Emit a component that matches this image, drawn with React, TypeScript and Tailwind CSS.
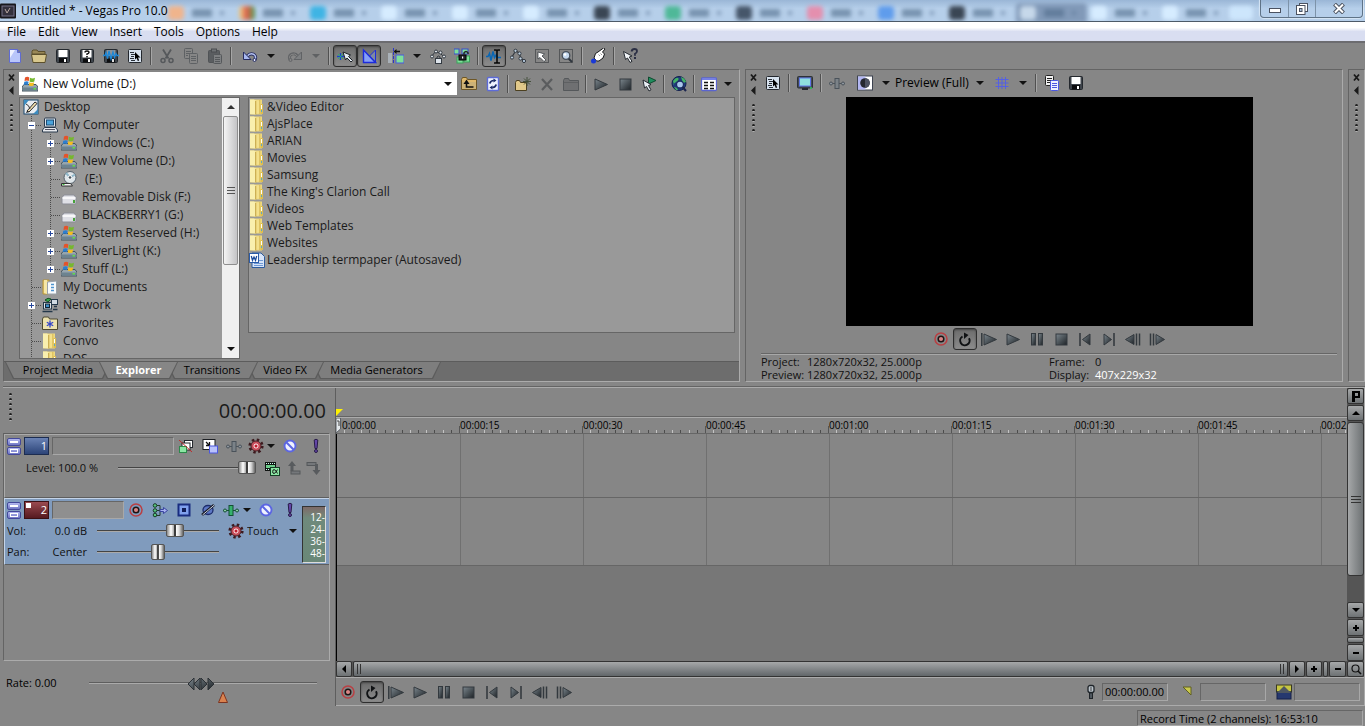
import React from 'react';

// 16x16 toolbar drawings, keyed by name
const ICONS: Record<string, React.ReactNode> = {
  newFile: (
    <>
      <path d="M2.500 1.500h8l3 3v10h-11z" fill="#b9c6fa" stroke="#5f6bd0" />
      <path d="M3 2h5L3 10z" fill="#eef1ff" />
      <path d="M10.500 1.500v3h3z" fill="#868686" stroke="#5f6bd0" />
    </>
  ),
  open: (
    <>
      <path d="M1 5V3l1-1h4l1 1.500h7V6H1z" fill="#9a8857" stroke="#5c502d" />
      <path d="M.5 6.500h15l-1.500 8h-12z" fill="#d8c78d" stroke="#5c502d" />
    </>
  ),
  save: (
    <>
      <rect x="1.500" y="1.500" width="13" height="13" rx="1" fill="#3e444b" stroke="#24282d" />
      <rect x="3.500" y="2" width="9" height="7" fill="#fff" />
      <rect x="4" y="10" width="8" height="4.500" fill="#0c0d0f" />
      <rect x="9" y="11" width="2" height="3" fill="#fff" />
    </>
  ),
  saveAs: (
    <>
      <rect x="1.500" y="1.500" width="13" height="13" rx="1" fill="#3e444b" stroke="#24282d" />
      <rect x="3.500" y="2" width="9" height="7.500" fill="#fff" />
      <path d="M6 4.500q0-1.500 2-1.500t2 1.500Q10 5.500 8 6v1" fill="none" stroke="#111" strokeWidth="1.400" />
      <rect x="7.200" y="8" width="1.600" height="1.400" fill="#111" />
      <rect x="4" y="10.500" width="8" height="4" fill="#0c0d0f" />
      <rect x="9" y="11" width="2" height="3" fill="#fff" />
    </>
  ),
  render: (
    <>
      <rect x="1.500" y="1.500" width="13" height="13" rx="1" fill="#3e444b" stroke="#24282d" />
      <rect x="3.500" y="2" width="9" height="6" fill="#8b9299" />
      <rect x="4" y="10.500" width="8" height="4" fill="#0c0d0f" />
      <rect x="9" y="11" width="2" height="3" fill="#ddd" />
      <path d="M0 7.500h2l1-3 1.500 6L6 3l2 8 2-7 1.500 5.500 1.500-4 1 2h2" fill="none" stroke="#1d88d8" strokeWidth="1.300" />
    </>
  ),
  props: (
    <>
      <rect x="1.500" y="1.500" width="13" height="13" rx="1" fill="#d7e2ee" stroke="#23272d" />
      <path d="M3 4.500h4M4 6.500h4M4 8.500h3M3 10.500h4M4 12.500h4" stroke="#2a3038" />
      <path d="M8 4l5.500 5.500H11l1.200 3-1.400.6L9.600 10 8 11.500z" fill="#000" />
    </>
  ),
  cut: (
    <>
      <path d="M4 1.500l5.500 9M12 1.500l-5.500 9" stroke="#55585b" strokeWidth="1.800" />
      <circle cx="4" cy="12.500" r="2" fill="none" stroke="#55585b" strokeWidth="1.500" />
      <circle cx="12" cy="12.500" r="2" fill="none" stroke="#55585b" strokeWidth="1.500" />
    </>
  ),
  copy: (
    <>
      <rect x="1.500" y=".5" width="8" height="10" rx="1" fill="#868686" stroke="#5e6164" />
      <path d="M3 3.500h5M3 5.500h5M3 7.500h2" stroke="#5e6164" />
      <rect x="6.500" y="5.500" width="8" height="10" rx="1" fill="#868686" stroke="#5e6164" />
      <path d="M8 8.500h5M8 10.500h5M8 12.500h5" stroke="#5e6164" />
    </>
  ),
  paste: (
    <>
      <rect x="1.500" y="2.500" width="11" height="12" rx="1" fill="#5a5d60" stroke="#505356" />
      <rect x="4.500" y="1" width="5" height="3" fill="#6f7275" stroke="#4a4d50" />
      <rect x="6.500" y="6.500" width="8" height="9" rx="1" fill="#7d7f81" stroke="#55585b" />
      <path d="M8 9.500h5M8 11.500h5M8 13.500h5" stroke="#55585b" />
    </>
  ),
  undo: (
    <>
      <path d="M5 8.500Q8 4.500 12 6.500Q14.500 8.500 13 11.500" fill="none" stroke="#262c60" strokeWidth="3.200" />
      <path d="M5 8.500Q8 4.500 12 6.500Q14.500 8.500 13 11.500" fill="none" stroke="#b6c3f2" strokeWidth="1.400" />
      <path d="M1.500 4v7.500H9z" fill="#a9b9f0" stroke="#262c60" />
      <circle cx="12.500" cy="12" r="1.500" fill="#e6ebff" stroke="#262c60" />
    </>
  ),
  redo: (
    <>
      <path d="M11 8.500Q8 4.500 4 6.500Q1.500 8.500 3 11.500" fill="none" stroke="#626467" strokeWidth="3" />
      <path d="M11 8.500Q8 4.500 4 6.500Q1.500 8.500 3 11.500" fill="none" stroke="#868686" />
      <path d="M14.500 4v7.500H7z" fill="#7e8082" stroke="#606265" />
      <circle cx="3.500" cy="12" r="1.500" fill="#868686" stroke="#626467" />
    </>
  ),
  snap: (
    <>
      <path d="M0 8.500h7M3.500 5v7" stroke="#1849c8" strokeWidth="1.300" />
      <path d="M1 6l5 5M6 6l-5 5" stroke="#2fb26a" />
      <path d="M6 4l2.500 8 1.500-2 4 4 1.500-1.500-4-4 2-1.500z" fill="#e4ecf4" stroke="#1c2126" />
    </>
  ),
  crossfade: (
    <>
      <path d="M14.500 2v12.500L8.500 8z" fill="#7d88a4" stroke="#1c2bdc" />
      <path d="M2.500 2v12.500h12z" fill="#86a0f6" stroke="#1c2bdc" strokeWidth="1.400" />
    </>
  ),
  ripple: (
    <>
      <rect x="0" y="5" width="4" height="10" fill="#a9b1b8" />
      <path d="M5.500 0v16" stroke="#2b35c8" strokeDasharray="3 1" />
      <rect x="8" y="7" width="8" height="8" fill="#7fe09a" stroke="#4b57e0" />
      <path d="M12 3.500H7" stroke="#111" strokeWidth="1.500" />
      <path d="M5.500 3.500l3-2.500v5z" fill="#111" />
    </>
  ),
  lockEnv: (
    <>
      <path d="M2 8l3-4 5 1 4 4" fill="none" stroke="#333a42" />
      <g fill="#dde3ea" stroke="#333a42">
        <circle cx="2" cy="8.500" r="1.500" />
        <circle cx="6" cy="3.500" r="1.500" />
        <circle cx="10.500" cy="4.500" r="1.500" />
        <circle cx="14" cy="8.500" r="1.500" />
        <rect x="5.500" y="10.500" width="6" height="5" />
        <path d="M7 10.500V9q1.500-2 3 0v1.500" fill="none" />
      </g>
    </>
  ),
  ignoreGroup: (
    <>
      <rect x="0" y="1" width="5" height="5" fill="#7fe09a" stroke="#3a4ad0" />
      <rect x="8" y="1" width="6" height="5" fill="#7fe09a" stroke="#3a4ad0" />
      <rect x="3" y="9" width="6" height="6" fill="#7fe09a" stroke="#3aa35a" />
      <rect x="10" y="8" width="5.500" height="6" fill="#7fe09a" stroke="#3aa35a" />
      <rect x="5" y="7" width="7" height="5" fill="#24282d" stroke="#000" />
      <path d="M10 7V5q2-3 4 0v1" fill="none" stroke="#24282d" strokeWidth="1.500" />
      <rect x="8" y="8.500" width="1.200" height="2" fill="#fff" />
    </>
  ),
  normalEdit: (
    <>
      <path d="M0 8.500h2l1.500-3 1.500 7 2-9 1.500 6 2-3 1 3h3.500" fill="none" stroke="#0866b5" strokeWidth="1.500" />
      <path d="M8 2h2l1 .7 1-.7h2M8 15h2l1-.7 1 .7h2M11 2.500v12" stroke="#0a0a0a" strokeWidth="1.600" fill="none" />
    </>
  ),
  envelope: (
    <>
      <path d="M2 9l3.500-6 4 2 1 5 3.500 3" fill="none" stroke="#333a42" strokeWidth="1.200" />
      <g fill="#bcd0e2" stroke="#333a42">
        <circle cx="2" cy="9.500" r="1.600" />
        <circle cx="5.500" cy="2.800" r="1.600" />
        <circle cx="9.500" cy="5.500" r="1.600" />
        <circle cx="10.500" cy="10.500" r="1.600" />
        <circle cx="14" cy="13" r="1.600" />
      </g>
    </>
  ),
  selectEdit: (
    <>
      <rect x="1.500" y="1.500" width="13" height="13" fill="none" stroke="#24282d" strokeDasharray="1 1" />
      <path d="M4 4v7l2-1.500 4 4 2-1.500-4-4 2.500-2z" fill="#fff" stroke="#2b3036" strokeWidth=".7" />
    </>
  ),
  zoomEdit: (
    <>
      <rect x="1.500" y="1.500" width="13" height="13" fill="none" stroke="#24282d" strokeDasharray="1 1" />
      <path d="M10 10l4 4" stroke="#2f363e" strokeWidth="2" />
      <circle cx="8" cy="7.500" r="3.800" fill="#c5d8ee" stroke="#46505c" strokeWidth="1.300" />
      <circle cx="7" cy="6.500" r="1.300" fill="#fff" />
    </>
  ),
  hand: (
    <>
      <path d="M4 10l1.500-4.500L8 4l5.500-4 1.500 1-2.500 3 2 2-1.500 4L9 13H6.500z" fill="#fff" stroke="#15171a" />
      <path d="M8.500 6.500l1.500 1.500M10.500 5.500l1.500 1.500" stroke="#777" strokeWidth=".8" />
      <circle cx="3.500" cy="13" r="2.500" fill="#1a39d6" />
    </>
  ),
  help: (
    <>
      <path d="M1.500 3.500l2 8 2-1.500 2.500 4.500 2-1.200-2.700-4.300L10 8z" fill="#f3f6f9" stroke="#262b31" />
      <path d="M9.500 3.500q.5-2.500 3-2.500t2.500 2.200q0 1.500-2 2.500v2" fill="none" stroke="#2b2f44" strokeWidth="1.800" />
      <rect x="12" y="9" width="2" height="2" fill="#2b2f44" />
    </>
  ),
  up: (
    <>
      <path d="M.5 3.500l1-2h4l1 2h9v10H.5z" fill="#e0b96c" stroke="#6d5626" />
      <path d="M1 6h14v7H1z" fill="#cdb277" />
      <path d="M5.500 6v5h7" fill="none" stroke="#111" strokeWidth="1.600" />
      <path d="M5.500 3.500L2.500 8h6z" fill="#111" />
    </>
  ),
  refresh: (
    <>
      <rect x="2.500" y="1.500" width="11" height="13" rx="1" fill="#eef3ff" stroke="#5d6bd8" strokeWidth="1.400" />
      <path d="M4.800 7.500q.7-3 4-3M11.200 8.500q-.7 3-4 3" fill="none" stroke="#1b2a66" strokeWidth="1.700" />
      <path d="M8.500 2.500l3 2-3 2zM7.500 9.500l-3 2 3 2z" fill="#1b2a66" />
    </>
  ),
  newFolder: (
    <>
      <path d="M.5 6.500l1-2h3l1 2h6v8H.5z" fill="#e1c98a" stroke="#4c4020" />
      <path d="M12 1v9M8 5.500h8M9 2.500l6 6M15 2.500l-6 6" stroke="#3d4a34" strokeWidth=".9" />
    </>
  ),
  del: <path d="M3 3l10 11M13 3L3 14" stroke="#5a5c5e" strokeWidth="2.200" />,
  folderOff: (
    <>
      <path d="M.5 4.500l1-2h4l1 2h9v10H.5z" fill="#6f7072" stroke="#55585b" />
      <path d="M1 6.500h14" stroke="#5e6062" />
    </>
  ),
  play: <path d="M2 3l12.500 5.500L2 14z" fill="url(#steel)" stroke="#33393e" />,
  stop: <rect x="3" y="3" width="11" height="11" fill="url(#steel)" stroke="#33393e" />,
  autoPlay: (
    <>
      <path d="M7.500 1l7.500 3.500L7.500 8z" fill="#1f8d5d" stroke="#0f4a30" />
      <path d="M2 4l1.500 8 2-1.500 2.500 4.500 2-1.200-2.500-4.300 2.500-1z" fill="#e8eef4" stroke="#262b31" />
    </>
  ),
  globe: (
    <>
      <circle cx="8" cy="7.500" r="7" fill="#203a7c" stroke="#11204d" />
      <path d="M2 5q3-4 5-3T5 6 3 9zM10 1q4 1 5 5l-3 1zM3 11q3 0 4 3l-2 0z" fill="#43b264" />
      <circle cx="9" cy="8.500" r="3.500" fill="#a9c8ea" stroke="#1d2f63" strokeWidth="1.300" />
      <path d="M11.500 11l3.500 4" stroke="#1c2550" strokeWidth="2" />
    </>
  ),
  views: (
    <>
      <rect x=".5" y="2" width="15" height="12.500" rx="1" fill="#fff" stroke="#5a64cf" strokeWidth="1.300" />
      <path d="M1 3.200h14" stroke="#6d79e6" strokeWidth="1.500" />
      <path d="M3 6.500h4M3 9.500h4M3 12.500h4M9 6.500h4M9 9.500h4M9 12.500h4" stroke="#111" strokeWidth="1.400" />
    </>
  ),
  monitor: (
    <>
      <rect x=".5" y="1.500" width="15" height="11.500" rx="1" fill="#454b54" stroke="#2c3138" />
      <rect x="2.500" y="3" width="11" height="8" fill="#8fe0de" stroke="#5c75e8" />
      <rect x="5" y="13" width="6" height="2" fill="#24282d" />
      <circle cx="14" cy="13" r="1" fill="#2ecb5c" />
    </>
  ),
  fxOff: (
    <>
      <path d="M0 8.500h16" stroke="#4a525a" />
      <circle cx="2" cy="8.500" r="1.500" fill="#8e969e" stroke="#4a525a" />
      <circle cx="14" cy="8.500" r="1.500" fill="#8e969e" stroke="#4a525a" />
      <rect x="6" y="3.500" width="4" height="10" fill="#7b8288" stroke="#4a525a" />
    </>
  ),
  fxOn: (
    <>
      <path d="M0 8.500h16" stroke="#134f33" />
      <circle cx="2" cy="8.500" r="1.500" fill="#8fcfa8" stroke="#134f33" />
      <circle cx="14" cy="8.500" r="1.500" fill="#8fcfa8" stroke="#134f33" />
      <rect x="6" y="3.500" width="4" height="10" fill="#35b26c" stroke="#134f33" />
    </>
  ),
  split: (
    <>
      <rect x=".5" y="1" width="15" height="14" fill="#fff" stroke="#3d4350" />
      <rect x="1" y="1.500" width="7.500" height="13" fill="#b3b7f2" />
      <circle cx="8" cy="8" r="4.800" fill="#25282f" />
      <path d="M8 3.200a4.800 4.800 0 0 1 0 9.600z" fill="#4c5160" />
    </>
  ),
  grid: <path d="M4.500 2v12M8 2v12M11.500 2v12M1.500 4.500h13M1.500 8h13M1.500 11.500h13" stroke="#5560e2" />,
  copyShot: (
    <>
      <rect x="1.500" y=".5" width="8" height="10" rx="1" fill="#f2f2f2" stroke="#222" />
      <path d="M3 3.500h5M3 5.500h5M3 7.500h4" stroke="#222" />
      <rect x="6.500" y="5.500" width="8" height="10" rx="1" fill="#eef0ff" stroke="#4b57e0" />
      <path d="M8 8.500h5M8 10.500h5M8 12.500h5" stroke="#4b57e0" />
    </>
  ),
  record: (
    <>
      <circle cx="8" cy="8" r="6" fill="none" stroke="#b93f43" strokeWidth="1.500" />
      <circle cx="8" cy="8" r="2.800" fill="#d98585" stroke="#1c1414" strokeWidth="1.500" />
    </>
  ),
  loop: (
    <>
      <path d="M5.500 5.500a4.700 4.700 0 1 0 6.500 1.800" fill="none" stroke="#101214" strokeWidth="2" />
      <path d="M7 1.500v6.500l4.500-4z" fill="#101214" />
    </>
  ),
  playStart: (
    <>
      <path d="M.8 2v13" stroke="#33393e" strokeWidth="1.500" />
      <path d="M3 3l12.500 5.500L3 14z" fill="url(#steel)" stroke="#33393e" />
    </>
  ),
  pause: (
    <>
      <rect x="2.500" y="2.500" width="4" height="11.500" fill="url(#steel)" stroke="#33393e" />
      <rect x="9.500" y="2.500" width="4" height="11.500" fill="url(#steel)" stroke="#33393e" />
    </>
  ),
  toStart: (
    <>
      <path d="M3 2v13" stroke="#2f353a" strokeWidth="1.500" />
      <path d="M13 3v11L5.500 8.500z" fill="url(#steel)" stroke="#33393e" />
    </>
  ),
  toEnd: (
    <>
      <path d="M13 2v13" stroke="#2f353a" strokeWidth="1.500" />
      <path d="M3 3v11l7.500-5.500z" fill="url(#steel)" stroke="#33393e" />
    </>
  ),
  prevFrame: (
    <>
      <path d="M9 3.500v10L.5 8.500z" fill="url(#steel)" stroke="#33393e" />
      <path d="M11.500 2.500v12M14.500 2.500v12" stroke="#33393e" strokeWidth="1.500" />
    </>
  ),
  nextFrame: (
    <>
      <path d="M7 3.500v10l8.500-5z" fill="url(#steel)" stroke="#33393e" />
      <path d="M1.500 2.500v12M4.500 2.500v12" stroke="#33393e" strokeWidth="1.500" />
    </>
  ),
  bypassBlur: (
    <>
      <rect x="6.500" y="2.500" width="8" height="7" fill="#fff" stroke="#24282d" />
      <rect x="4" y="5" width="8" height="7" fill="#fff" stroke="#24282d" />
      <rect x="1.500" y="8.500" width="7" height="6" fill="#8ce6a4" stroke="#2a8a4a" />
      <path d="M1 2l13 12" stroke="#c02a2a" />
    </>
  ),
  panCrop: (
    <>
      <rect x="1" y="1.500" width="12" height="10" fill="#fff" stroke="#1b1e22" />
      <path d="M4 4l3 3M7.500 4v3.500H4" stroke="#111" strokeWidth="1.300" fill="none" />
      <rect x="7.500" y="8" width="8" height="7" fill="#b9c2fb" stroke="#4b57e0" />
    </>
  ),
  gear: (
    <>
      <circle cx="8" cy="8" r="6.200" fill="none" stroke="#3c1a1e" strokeWidth="2.800" strokeDasharray="2.400 2.470" />
      <circle cx="8" cy="8" r="5" fill="#c45560" stroke="#4b1e24" />
      <circle cx="8" cy="8" r="3.200" fill="#f6d7da" stroke="#c03040" />
      <circle cx="8" cy="8" r="1.500" fill="#c01c30" />
    </>
  ),
  mute: (
    <>
      <circle cx="8" cy="8" r="5.500" fill="#f0f2ff" stroke="#5c66e2" strokeWidth="1.900" />
      <path d="M4.300 4.300l7.400 7.400" stroke="#5c66e2" strokeWidth="2" />
    </>
  ),
  solo: (
    <>
      <path d="M6.200 2q1.800-1.500 3.600 0L9 10.500H7z" fill="#6446a8" stroke="#281c48" />
      <circle cx="8" cy="13" r="1.500" fill="#6446a8" stroke="#281c48" />
    </>
  ),
  composite: (
    <>
      <rect x="1" y="2" width="11" height="9" fill="#101412" />
      <path d="M2 3.500h9M2 9.500h5" stroke="#cfe" strokeDasharray="1 1" />
      <rect x="2" y="5" width="9" height="3" fill="#6dce8b" />
      <rect x="6.500" y="7.500" width="9" height="8" fill="#8ce6a4" stroke="#143e24" />
      <path d="M13.500 9.500q-2 4-3.500 4t-1.300-2 1.300-2q1.500 0 3.500 4" fill="none" stroke="#111" />
    </>
  ),
  parent: (
    <>
      <path d="M2 6l4-5 4 5H7.500v5h-3V6z" fill="#585b5e" />
      <rect x="5" y="11" width="9" height="3" fill="#74777a" stroke="#55585b" />
    </>
  ),
  child: (
    <>
      <rect x="1" y="2.500" width="9" height="3" fill="#74777a" stroke="#55585b" />
      <path d="M9 4h3v6h2.500l-4 5-4-5H9z" fill="#585b5e" />
    </>
  ),
  inputFx: (
    <>
      <path d="M5 3.500h3v10H5M5 8.500h4" fill="none" stroke="#223a2c" />
      <g fill="#57c57f" stroke="#173a26">
        <circle cx="3" cy="3.500" r="1.800" />
        <circle cx="3" cy="8.500" r="1.800" />
        <circle cx="3" cy="13" r="1.800" />
      </g>
      <path d="M8 7.500h3.500V5.500l4 3-4 3V9.500H8z" fill="#a8b2f2" stroke="#39459e" />
    </>
  ),
  busSquare: (
    <>
      <rect x="2.500" y="2.500" width="11" height="11" fill="#7fa0ee" stroke="#182c80" strokeWidth="2" />
      <rect x="6" y="6" width="4" height="4" fill="#101c58" />
    </>
  ),
  phase: (
    <>
      <ellipse cx="8" cy="8" rx="5" ry="4.500" fill="#5b76c4" stroke="#1c2c6a" strokeWidth="1.300" />
      <path d="M2 13L14 3" stroke="#1a1c22" strokeWidth="2.500" />
      <path d="M2.500 13L14 3.300" stroke="#d9e2ff" strokeWidth=".9" />
    </>
  ),
  mic: (
    <>
      <rect x="5" y="1.500" width="6" height="7" rx="2" fill="#b9c2ca" stroke="#1f2429" strokeWidth="1.300" />
      <path d="M8 3v4" stroke="#444" />
      <rect x="6.500" y="9" width="3" height="5.500" fill="#4f575e" stroke="#1f2429" />
    </>
  ),
  cursorMark: <path d="M3 3h8v8z" fill="#c9c84c" stroke="#5f5e22" />,
  loopMark: (
    <>
      <rect x=".5" y="1" width="15" height="7" fill="#c6c542" stroke="#3a3a20" />
      <rect x="1" y="8" width="14" height="7" fill="#26386f" stroke="#16204a" />
      <path d="M1 9l7-7 7 7z" fill="#4e5660" />
    </>
  ),
  desktop: (
    <>
      <rect x="1" y="1" width="14" height="14" fill="#e9edf2" stroke="#1d4a70" />
      <path d="M1 1h5L1 7zM15 15h-5l5-5z" fill="#3c8cc0" />
      <path d="M4 12l8-9 2 1.500-8 8.500z" fill="#f7e3b0" stroke="#26292d" />
      <path d="M4 12l-1 2 3-1z" fill="#111" />
      <path d="M3 5q3 1 4 5" stroke="#333" fill="none" />
    </>
  ),
  computer: (
    <>
      <rect x="2.500" y="1" width="11" height="9" rx="1" fill="#d9e0e8" stroke="#2a3a4d" />
      <rect x="4.500" y="3" width="7" height="5" fill="#4ba4dc" stroke="#1d4c74" />
      <path d="M.5 13l2-2.500h11l2 2.500v2H.5z" fill="#e8eaee" stroke="#2a3a4d" />
      <path d="M3 12.500h10" stroke="#556" />
    </>
  ),
  winDrive: (
    <>
      <path d="M0 11l2-2.500h12l2 2.500v4H0z" fill="#96a5ae" stroke="#45555e" />
      <rect x="1" y="11.500" width="14" height="3" fill="#6c8390" />
      <rect x="11.500" y="12" width="2.500" height="1.500" fill="#62e04a" />
      <path d="M3 1.500Q5.500 0 7.300 1.500L6.800 5Q5 4 2.500 5z" fill="#e4532a" />
      <path d="M8 1.800q2.500 1.200 5 0L12.300 5.500q-2.500 1-4.800 0z" fill="#76b82e" />
      <path d="M2.300 5.700Q5 4.700 6.600 5.700L6 9Q4 8.200 1.700 9z" fill="#2b7fd0" />
      <path d="M7.300 6.200q2.500 1 4.800 0L11.500 9.500q-2.500 1-4.700 0z" fill="#f4bd22" />
    </>
  ),
  disc: (
    <>
      <circle cx="9" cy="6.500" r="6" fill="#dfe6ea" stroke="#56626c" />
      <path d="M9 6.500L14 3.500M9 6.500L5 2" stroke="#8fb6c8" strokeWidth="2" />
      <circle cx="9" cy="6.500" r="1.800" fill="#46525c" stroke="#fff" />
      <path d="M.5 12.500h9l2 2.500H.5z" fill="#f3f3f3" stroke="#333" />
      <rect x="1.500" y="13" width="2" height="1" fill="#3cc43c" />
    </>
  ),
  removable: (
    <>
      <path d="M1 8.500L3 6h10l2 2.500v5.500q0 1-1 1H2q-1 0-1-1z" fill="#dfe0e6" stroke="#8b8d96" />
      <path d="M1.500 9h13" stroke="#fff" strokeWidth="1.500" />
      <rect x="12" y="11" width="2" height="3" fill="#46a23a" />
    </>
  ),
  documents: (
    <>
      <path d="M1 1h6v14H1z" fill="#e8cd77" stroke="#b49338" />
      <path d="M5.500 3l9-1v13h-9z" fill="#f8fafc" stroke="#9aa2aa" />
      <path d="M9 5.500h3M9 8.500h3M9 11.500h3" stroke="#4d94cf" strokeWidth="1.300" />
      <path d="M2 1h3v14l-3-1z" fill="#f6e7a7" />
    </>
  ),
  network: (
    <>
      <path d="M3 3q3-3 6-1L6 5z" fill="#35a34b" stroke="#145223" />
      <rect x="9.500" y="2.500" width="6" height="5" fill="#cfdae3" stroke="#24384a" />
      <rect x="1.500" y="5.500" width="8" height="6.500" fill="#e0e7ec" stroke="#24384a" />
      <rect x="3.500" y="7" width="4" height="3.500" fill="#3d8fc9" stroke="#123" />
      <path d="M.5 14.500h10M12 9.500h3M11 12.500h4.500" stroke="#24384a" strokeWidth="1.500" />
    </>
  ),
  favorites: (
    <>
      <path d="M.5 4l1-2h5l1 2h8v10.500H.5z" fill="#ece2ae" stroke="#4d4930" />
      <path d="M8 5.500v7M4.800 7.200l6.400 3.600M11.200 7.200l-6.400 3.600" stroke="#3446c9" strokeWidth="1.300" />
    </>
  ),
  folder: (
    <>
      <path d="M1 .5h12v15H1z" fill="#efd97f" />
      <path d="M1 .5h4l2 1.500v13.500L1 15z" fill="#f9efae" />
      <path d="M6.800 2v13.500" stroke="#b9942e" />
      <path d="M7.500 1.500h3v12.500l-3 1z" fill="#f3e08c" />
      <path d="M10.800 1v14" stroke="#d0ac42" strokeWidth=".7" />
      <rect x="11.500" y="5" width="2.500" height="10" fill="#dcbd50" />
      <rect x="12" y="6" width="1" height="4" fill="#fff" />
      <rect x="12" y="11" width="1" height="2" fill="#5aa7c8" />
    </>
  ),
  word: (
    <>
      <path d="M3 1h9l3.500 3.500V15.500H3z" fill="#d7e4f8" stroke="#2d5c9e" />
      <path d="M9 8.500h5M5 11.500h9M5 13.500h9" stroke="#6f9ad6" />
      <rect x=".5" y="1.500" width="9" height="9" fill="#fff" stroke="#2a5ba8" />
      <path d="M2.300 4l1.200 4.300L5 5l1.500 3.300L7.700 4" fill="none" stroke="#1c4c9c" strokeWidth="1.300" />
    </>
  ),
};

const Icon: React.FC<{ name: string; className?: string }> = ({ name, className = 'size-4' }) => (
  <svg viewBox="0 0 16 16" className={`shrink-0 ${className}`} aria-hidden="true">
    {ICONS[name]}
  </svg>
);

const Arrow: React.FC<{ off?: boolean }> = ({ off }) => (
  <svg viewBox="0 0 8 4" className="h-1 w-2 shrink-0" aria-hidden="true">
    <path d="M0 0h8L4 4z" fill={off ? '#5f6163' : '#111'} />
  </svg>
);

interface ToolProps {
  icon: string;
  label: string;
  pressed?: boolean;
  width?: string;
}

const Tool: React.FC<ToolProps> = ({ icon, label, pressed, width = 'w-6' }) => (
  <button
    aria-label={label}
    className={`flex h-[22px] shrink-0 items-center justify-center ${width} ${
      pressed ? 'rounded-[3px] border border-[#2e2e2e] bg-linear-to-b from-[#6c6c6c] to-[#8c8c8c] shadow-[inset_0_1px_2px_#444]' : ''
    }`}
  >
    <Icon name={icon} />
  </button>
);

const DropButton: React.FC<{ label: string; off?: boolean; width?: string }> = ({ label, off, width = 'w-[18px]' }) => (
  <button aria-label={label} className={`flex h-[22px] shrink-0 items-center justify-center ${width}`}>
    <Arrow off={off} />
  </button>
);

const Sep: React.FC<{ tight?: boolean }> = ({ tight }) => (
  <div className={`h-[18px] w-[2px] shrink-0 border-l border-r border-l-[#505050] border-r-[#a6a6a6] ${tight ? 'mx-[2px]' : 'mx-[3px]'}`} />
);

const Dots = () => (
  <div className="flex flex-col gap-[2px]">
    {[0, 1, 2, 3, 4, 5].map(i => (
      <span key={i} className="block h-[3px] w-[3px] rounded-full border-b border-b-[#b5b5b5] bg-[#1c1c1c]" />
    ))}
  </div>
);

const Gutter = () => (
  <div className="flex w-[15px] shrink-0 flex-col items-center pt-[3px]">
    <button aria-label="Close panel" className="h-[9px] w-[9px]">
      <svg viewBox="0 0 9 9" className="size-[9px]"><path d="M2 1.500l5 6M7 1.500l-5 6" stroke="#1a1a1a" strokeWidth="1.800" /></svg>
    </button>
    <button aria-label="Collapse panel" className="mt-1 h-[9px] w-[9px]">
      <svg viewBox="0 0 9 9" className="size-[9px]"><path d="M6.500 0v9L2 4.500z" fill="#1a1a1a" /></svg>
    </button>
    <div className="mt-[9px]"><Dots /></div>
  </div>
);

const panel = 'border border-t-[#646464] border-l-[#646464] border-r-[#ababab] border-b-[#ababab]';
const sunken = 'border border-t-[#666] border-l-[#666] border-r-[#a8a8a8] border-b-[#a8a8a8]';

// colours of the browser tabs seen through the glass title bar
const GLASS = [
  'bg-[#f0b48c]', 'bg-linear-to-r from-[#ecd98a] via-[#d8584a] to-[#2f9a52]', 'bg-[#3fb4e4]', 'bg-[#d6ecff]', 'bg-[#d6ecff]',
  'bg-[#d6ecff]', 'bg-[#3a4654]', 'bg-[#4fb898]', 'bg-[#46566a]', 'bg-[#e48fae]', 'bg-[#5f9cec]', 'bg-[#3a4654]',
  'bg-[#c6d8ea]', 'bg-[#d6ecff]', 'bg-[#d6ecff]',
];

const TitleBar = () => (
  <header className="relative flex h-[22px] shrink-0 items-center overflow-hidden border-b border-[#4d5a68] bg-linear-to-b from-[#9ab6d6] to-[#b6cfea] to-40%">
    <div className="absolute inset-y-0 left-[164px] flex items-center pt-1 blur-[2px]">
      {GLASS.map((color, i) => (
        <div key={i} className={`flex h-5 w-[71px] items-center gap-2 rounded-t px-1 ${i === 12 ? 'bg-[#8199b8]' : ''}`}>
          <span className={`h-[14px] w-4 rounded-sm ${color}`} />
          <span className="h-2 w-5 bg-[#4f6a88]/60" />
          <span className="h-1 w-1 bg-[#5c7794]/60" />
        </div>
      ))}
      <div className="h-[14px] w-6 rounded bg-[#cde6fc]" />
    </div>
    <svg viewBox="0 0 16 16" className="relative size-4 shrink-0">
      <rect width="16" height="15" y=".5" rx="1" fill="#17161b" />
      <rect x="2" y="3" width="12" height="10" fill="#33303c" stroke="#77738a" />
      <path d="M5 6l2 4 3-5" stroke="#b7a7a0" fill="none" />
    </svg>
    <h1 className="relative ml-[5px] text-xs text-black">Untitled * - Vegas Pro 10.0</h1>
    <div className="relative mr-[2px] ml-auto flex h-[18px] self-start rounded-b border border-t-0 border-[#5f7387] shadow-[0_0_1px_1px_#d7e6f5]">
      <button aria-label="Minimize" className="flex w-[28px] items-center justify-center border-r border-[#7d93a9]">
        <svg viewBox="0 0 12 5" className="mt-1 h-[5px] w-3"><rect x=".5" y=".5" width="11" height="4" fill="#fff" stroke="#4b5260" /></svg>
      </button>
      <button aria-label="Restore" className="flex w-[27px] items-center justify-center border-r border-[#7d93a9]">
        <svg viewBox="0 0 12 12" className="size-3">
          <rect x="3.500" y=".5" width="8" height="8" fill="#fff" stroke="#4b5260" />
          <rect x=".5" y="2.500" width="8.500" height="9" fill="#fff" stroke="#4b5260" />
          <rect x="3.500" y="5.500" width="2.500" height="3" fill="#a9c3de" stroke="#4b5260" />
        </svg>
      </button>
      <button aria-label="Close" className="flex w-[46px] items-center justify-center">
        <svg viewBox="0 0 12 11" className="h-[11px] w-3">
          <path d="M1.500 1l9 9M10.500 1l-9 9" stroke="#4b5260" strokeWidth="4" />
          <path d="M2 1.500l8 8M10 1.500l-8 8" stroke="#fff" strokeWidth="2" />
        </svg>
      </button>
    </div>
  </header>
);

const MENUS = ['File', 'Edit', 'View', 'Insert', 'Tools', 'Options', 'Help'];

const MainToolbar = () => (
  <div className="flex h-[26px] shrink-0 items-center pl-[3px]">
    <Tool icon="newFile" label="New" />
    <Tool icon="open" label="Open" />
    <Tool icon="save" label="Save" />
    <Tool icon="saveAs" label="Save as" />
    <Tool icon="render" label="Render as" />
    <Tool icon="props" label="Properties" />
    <Sep />
    <Tool icon="cut" label="Cut" />
    <Tool icon="copy" label="Copy" />
    <Tool icon="paste" label="Paste" />
    <Sep />
    <div className="flex pl-[3px]">
      <Tool icon="undo" label="Undo" />
      <DropButton label="Undo history" />
    </div>
    <div className="flex pl-[3px]">
      <Tool icon="redo" label="Redo" />
      <DropButton label="Redo history" off />
    </div>
    <Sep />
    <Tool icon="snap" label="Enable snapping" pressed />
    <Tool icon="crossfade" label="Automatic crossfades" pressed />
    <div className="flex pl-[3px]">
      <Tool icon="ripple" label="Auto ripple" />
      <DropButton label="Ripple mode" />
    </div>
    <Tool icon="lockEnv" label="Lock envelopes" />
    <Tool icon="ignoreGroup" label="Ignore event grouping" />
    <Sep />
    <Tool icon="normalEdit" label="Normal edit tool" pressed />
    <Tool icon="envelope" label="Envelope edit tool" />
    <Tool icon="selectEdit" label="Selection edit tool" />
    <Tool icon="zoomEdit" label="Zoom edit tool" />
    <Sep />
    <Tool icon="hand" label="Interactive tutorials" />
    <Sep />
    <Tool icon="help" label="What's this help" />
  </div>
);

interface TreeNode {
  label: string;
  icon: string;
  level: number;
  box?: '+' | '-';
  last?: boolean;
}

const TREE: TreeNode[] = [
  { label: 'Desktop', icon: 'desktop', level: 0 },
  { label: 'My Computer', icon: 'computer', level: 1, box: '-' },
  { label: 'Windows (C:)', icon: 'winDrive', level: 2, box: '+' },
  { label: 'New Volume (D:)', icon: 'winDrive', level: 2, box: '+' },
  { label: '\u00a0(E:)', icon: 'disc', level: 2 },
  { label: 'Removable Disk (F:)', icon: 'removable', level: 2 },
  { label: 'BLACKBERRY1 (G:)', icon: 'removable', level: 2 },
  { label: 'System Reserved (H:)', icon: 'winDrive', level: 2, box: '+' },
  { label: 'SilverLight (K:)', icon: 'winDrive', level: 2, box: '+' },
  { label: 'Stuff (L:)', icon: 'winDrive', level: 2, box: '+', last: true },
  { label: 'My Documents', icon: 'documents', level: 1 },
  { label: 'Network', icon: 'network', level: 1, box: '+' },
  { label: 'Favorites', icon: 'favorites', level: 1 },
  { label: 'Convo', icon: 'folder', level: 1 },
  { label: 'DOS', icon: 'folder', level: 1 },
];

// dotted connector in front of a tree row, with its optional expand box
const Branch: React.FC<{ branch: boolean; box?: string; last?: boolean }> = ({ branch, box, last }) => (
  <svg viewBox="0 0 19 18" className="h-[18px] w-[19px] shrink-0" aria-hidden="true">
    <path d={last ? 'M9.500 0v10' : 'M9.500 0v18'} stroke="#4a4a4a" strokeDasharray="1 1" />
    {branch && <path d="M10 9.500h9" stroke="#4a4a4a" strokeDasharray="1 1" />}
    {box && (
      <>
        <rect x="6" y="6" width="7" height="7" fill="#fff" />
        <path d={box === '+' ? 'M7 9.500h5M9.500 7v5' : 'M7 9.500h5'} stroke="#26479c" />
      </>
    )}
  </svg>
);

const FILES = [
  '&Video Editor', 'AjsPlace', 'ARIAN', 'Movies', 'Samsung', "The King's Clarion Call", 'Videos', 'Web Templates', 'Websites',
];

const TABS = [
  { label: 'Project Media', width: 'w-[106px]', z: 'z-[5]' },
  { label: 'Explorer', width: 'w-[79px]', z: 'z-[6]', active: true },
  { label: 'Transitions', width: 'w-[92px]', z: 'z-[4]' },
  { label: 'Video FX', width: 'w-[78px]', z: 'z-[3]' },
  { label: 'Media Generators', width: 'w-[129px]', z: 'z-[2]' },
];

const Explorer = () => (
  <section className={`flex w-[737px] shrink-0 flex-col ${panel}`}>
    <div className="flex min-h-0 flex-1">
      <Gutter />
      <div className="flex min-w-0 flex-1 flex-col pr-1">
        <div className="flex h-[27px] shrink-0 items-center">
          <div className="flex h-[23px] flex-1 items-center bg-white pr-[5px] pl-[3px]">
            <Icon name="winDrive" />
            <select aria-label="Location" className="h-full min-w-0 flex-1 appearance-none bg-white pl-[5px] text-xs text-[#111] outline-none">
              <option>New Volume (D:)</option>
            </select>
            <Arrow />
          </div>
          <div className="flex shrink-0 items-center">
            <Tool icon="up" label="Up one level" />
            <Tool icon="refresh" label="Refresh" />
            <Sep tight />
            <Tool icon="newFolder" label="New folder" />
            <Tool icon="del" label="Delete" />
            <Tool icon="folderOff" label="Add to favorites" />
            <Sep tight />
            <Tool icon="play" label="Start preview" />
            <Tool icon="stop" label="Stop preview" />
            <Tool icon="autoPlay" label="Auto preview" />
            <Sep tight />
            <Tool icon="globe" label="Get media from the web" />
            <Sep tight />
            <Tool icon="views" label="Views" />
            <DropButton label="Choose view" width="w-[14px]" />
          </div>
        </div>
        <div className="flex min-h-0 flex-1 gap-2">
          <div className="flex h-[262px] w-[221px] shrink-0 border border-[#666] bg-[#999]">
            <ul className="min-w-0 flex-1 overflow-hidden pl-[2px] text-xs text-[#1a1a1a]">
              {TREE.map(node => (
                <li key={node.label} className="flex h-[18px] items-center whitespace-nowrap">
                  {node.level === 2 && <Branch branch={false} />}
                  {node.level > 0 && <Branch branch box={node.box} last={node.last} />}
                  <Icon name={node.icon} className="ml-px size-4" />
                  <span className="ml-[5px]">{node.label}</span>
                </li>
              ))}
            </ul>
            <div className="flex w-[17px] shrink-0 flex-col items-center bg-[#f0f0f0]">
              <button aria-label="Scroll up" className="flex h-[18px] w-full items-center justify-center">
                <svg viewBox="0 0 8 4" className="h-1 w-2"><path d="M0 4h8L4 0z" fill="#333" /></svg>
              </button>
              <div className="flex h-[149px] w-[15px] flex-col items-center justify-center gap-[2px] rounded-[2px] border border-[#8e8e8e] bg-linear-to-r from-[#f4f4f4] to-[#c4c4c6]">
                <span className="h-px w-2 bg-[#555]" />
                <span className="h-px w-2 bg-[#555]" />
                <span className="h-px w-2 bg-[#555]" />
              </div>
              <button aria-label="Scroll down" className="mt-auto flex h-[18px] w-full items-center justify-center">
                <Arrow />
              </button>
            </div>
          </div>
          <ul className="h-[236px] min-w-0 flex-1 border border-[#666] bg-[#999] text-xs text-[#1a1a1a]">
            {FILES.map(name => (
              <li key={name} className="flex h-[17px] items-center">
                <Icon name="folder" />
                <span className="ml-[2px]">{name}</span>
              </li>
            ))}
            <li className="flex h-[17px] items-center">
              <Icon name="word" />
              <span className="ml-[2px]">Leadership termpaper (Autosaved)</span>
            </li>
          </ul>
        </div>
      </div>
    </div>
    <div role="tablist" className="isolate mt-[2px] flex h-[20px] shrink-0 border-t border-[#5c5c5c] bg-[#6d6d6d] pl-[13px] text-[11px]">
      {TABS.map(tab => (
        <button
          key={tab.label}
          role="tab"
          aria-selected={!!tab.active}
          className={`relative -ml-3 h-[17px] shrink-0 bg-[#5c5c5c] px-px pb-px [clip-path:polygon(0_0,100%_0,calc(100%-8px)_100%,8px_100%)] ${tab.width} ${tab.z}`}
        >
          <span
            className={`flex h-4 items-center justify-center whitespace-nowrap [clip-path:polygon(0_0,100%_0,calc(100%-8px)_100%,8px_100%)] ${
              tab.active ? 'bg-[#868686] font-bold text-white' : 'bg-[#7e7e7e] text-black'
            }`}
          >
            {tab.label}
          </span>
        </button>
      ))}
    </div>
  </section>
);

const Transport = () => (
  <div className="flex shrink-0">
    <Tool icon="record" label="Record" />
    <Tool icon="loop" label="Loop playback" pressed />
    <Tool icon="playStart" label="Play from start" />
    <Tool icon="play" label="Play" />
    <Tool icon="pause" label="Pause" />
    <Tool icon="stop" label="Stop" />
    <Tool icon="toStart" label="Go to start" />
    <Tool icon="toEnd" label="Go to end" />
    <Tool icon="prevFrame" label="Previous frame" />
    <Tool icon="nextFrame" label="Next frame" />
  </div>
);

const Preview = () => (
  <section className={`flex min-w-0 flex-1 ${panel}`}>
    <Gutter />
    <div className="flex min-w-0 flex-1 flex-col pr-[5px]">
      <div className="flex h-[26px] shrink-0 items-center">
        <Tool icon="props" label="Project video properties" />
        <Sep />
        <Tool icon="monitor" label="Preview on external monitor" />
        <Sep />
        <Tool icon="fxOff" label="Video output FX" />
        <div className="flex pl-1">
          <Tool icon="split" label="Split screen view" />
          <DropButton label="Split screen options" />
        </div>
        <select aria-label="Preview quality" className="w-[75px] appearance-none text-xs text-black outline-none">
          <option>Preview (Full)</option>
        </select>
        <div className="flex w-5 justify-center"><Arrow /></div>
        <Tool icon="grid" label="Overlays" />
        <DropButton label="Overlay options" />
        <Sep />
        <Tool icon="copyShot" label="Copy snapshot" />
        <Tool icon="save" label="Save snapshot" />
      </div>
      <div className="mx-auto mt-px aspect-[407/229] h-[229px] shrink-0 bg-black" />
      <div className="mt-[2px] flex shrink-0 justify-center"><Transport /></div>
      <div className="mt-[3px] h-[2px] shrink-0 border-t border-b border-t-[#666] border-b-[#a8a8a8]" />
      <div className="flex text-[11px] leading-[13px] text-[#111]">
        <dl className="grid w-1/2 grid-cols-[46px_1fr] content-start">
          <dt>Project:</dt>
          <dd>1280x720x32, 25.000p</dd>
          <dt>Preview:</dt>
          <dd>1280x720x32, 25.000p</dd>
        </dl>
        <dl className="grid w-1/2 grid-cols-[46px_1fr] content-start">
          <dt>Frame:</dt>
          <dd>0</dd>
          <dt>Display:</dt>
          <dd className="text-white">407x229x32</dd>
        </dl>
      </div>
    </div>
  </section>
);

interface FaderProps {
  label: string;
  value: number;
  width: string;
  tall?: boolean;
}

const Fader: React.FC<FaderProps> = ({ label, value, width, tall }) => (
  <input
    type="range"
    aria-label={label}
    defaultValue={value}
    className={`h-4 shrink-0 appearance-none bg-transparent [&::-webkit-slider-runnable-track]:h-[2px] [&::-webkit-slider-runnable-track]:border-t [&::-webkit-slider-runnable-track]:border-b [&::-webkit-slider-runnable-track]:border-t-[#444] [&::-webkit-slider-runnable-track]:border-b-[#aaa] [&::-webkit-slider-thumb]:appearance-none [&::-webkit-slider-thumb]:rounded-[2px] [&::-webkit-slider-thumb]:border [&::-webkit-slider-thumb]:border-[#555] [&::-webkit-slider-thumb]:bg-[linear-gradient(90deg,#8a8a8a,#fff_25%,#a5a5a5_44%,#3c3c3c_46%,#3c3c3c_54%,#fff_56%,#ddd_75%,#666)] ${width} ${
      tall
        ? '[&::-webkit-slider-thumb]:mt-[-8px] [&::-webkit-slider-thumb]:h-4 [&::-webkit-slider-thumb]:w-[14px]'
        : '[&::-webkit-slider-thumb]:mt-[-7px] [&::-webkit-slider-thumb]:h-[13px] [&::-webkit-slider-thumb]:w-[18px]'
    }`}
  />
);

const SizeButtons = () => (
  <div className="flex w-[14px] shrink-0 flex-col gap-px">
    <button aria-label="Minimize track height" className="flex h-2 items-center justify-center rounded-[2px] border border-[#43489a] bg-linear-to-b from-[#b3b8f0] to-[#7177c4]">
      <span className="h-[2px] w-2 bg-white" />
    </button>
    <button aria-label="Maximize track height" className="flex h-2 items-center justify-center rounded-[2px] border border-[#43489a] bg-linear-to-b from-[#b3b8f0] to-[#7177c4]">
      <span className="h-1 w-2 border border-white" />
    </button>
  </div>
);

const TrackHeaders = () => (
  <div className="flex flex-1 flex-col border-t border-r border-b border-l border-t-[#5e5e5e] border-r-[#ababab] border-b-[#ababab] border-l-[#646464] text-[11px] text-[#111]">
    <div className="h-16 shrink-0 border-t border-b border-l border-t-[#ababab] border-b-[#5e5e5e] border-l-[#ababab] pt-[2px] pr-px pl-[2px]">
      <div className="flex h-[18px] items-center">
        <SizeButtons />
        <div className="ml-[3px] h-[18px] w-[25px] shrink-0 border border-[#1c2c50] bg-linear-to-b from-[#6a82b4] to-[#2c4478] pr-px text-right leading-4 text-white">1</div>
        <input aria-label="Track 1 name" className={`ml-[3px] h-[18px] min-w-0 flex-1 ${sunken}`} />
        <Tool icon="bypassBlur" label="Bypass motion blur" />
        <Tool icon="panCrop" label="Track motion" />
        <Tool icon="fxOff" label="Track FX" />
        <Tool icon="gear" label="Automation settings" width="w-5" />
        <DropButton label="Automation mode" width="w-[10px]" />
        <Tool icon="mute" label="Mute track 1" width="w-7" />
        <Tool icon="solo" label="Solo track 1" />
      </div>
      <div className="mt-1 flex h-[18px] items-center pl-[19px]">
        <span className="w-[92px] whitespace-nowrap">Level: 100.0 %</span>
        <Fader label="Level" value={100} width="w-[138px]" />
        <div className="ml-1 flex">
          <Tool icon="composite" label="Compositing mode" />
          <Tool icon="parent" label="Make compositing parent" width="w-5" />
          <Tool icon="child" label="Make compositing child" width="w-5" />
        </div>
      </div>
    </div>
    <div className="flex h-[67px] shrink-0 border-t border-b border-l border-t-[#c3d3e8] border-b-[#5e5e5e] border-l-[#c3d3e8] bg-[#809bbd] pr-px">
      <div className="min-w-0 flex-1 pt-[2px] pl-[2px]">
        <div className="flex h-[18px] items-center">
          <SizeButtons />
          <div className="ml-[3px] flex h-[18px] w-[25px] shrink-0 justify-between border border-[#3a1014] bg-linear-to-b from-[#9a4a50] to-[#561a20] pr-px leading-4 text-white">
            <span className="mt-px ml-px block size-[5px] bg-white" />
            2
          </div>
          <input aria-label="Track 2 name" className={`ml-[3px] h-[18px] min-w-0 flex-1 bg-[#8f8f8f] ${sunken}`} />
          <Tool icon="record" label="Arm for record" />
          <Tool icon="inputFx" label="Input monitor" />
          <Tool icon="busSquare" label="Bus assignment" />
          <Tool icon="phase" label="Invert phase" />
          <Tool icon="fxOn" label="Track 2 FX" width="w-[22px]" />
          <DropButton label="Track 2 FX chain" width="w-[10px]" />
          <Tool icon="mute" label="Mute track 2" width="w-7" />
          <Tool icon="solo" label="Solo track 2" width="w-5" />
        </div>
        <div className="mt-[3px] flex h-[18px] items-center">
          <span className="w-[30px]">Vol:</span>
          <span className="w-[50px] text-right">0.0 dB</span>
          <Fader label="Volume" value={66} width="ml-[10px] w-[122px]" />
          <div className="ml-[6px] flex items-center">
            <Tool icon="gear" label="Track 2 automation" width="w-[22px]" />
            <select aria-label="Automation mode" className="w-[42px] appearance-none text-[11px] outline-none">
              <option>Touch</option>
            </select>
            <Arrow />
          </div>
        </div>
        <div className="mt-[3px] flex h-[18px] items-center">
          <span className="w-[30px]">Pan:</span>
          <span className="w-[50px] text-right">Center</span>
          <Fader label="Pan" value={50} width="ml-[10px] w-[122px]" tall />
        </div>
      </div>
      <div className="mx-[2px] mt-[7px] flex h-[57px] w-6 shrink-0 flex-col items-end border border-[#dcdcdc] border-t-[#333] border-l-[#333] bg-linear-to-b from-[#7d6a68] via-[#6f8a7c] via-20% to-[#6a8878] pt-1 text-[10px] leading-[12px] text-white">
        {['12', '24', '36', '48'].map(db => (
          <span key={db}>{db}-</span>
        ))}
      </div>
    </div>
  </div>
);

const LeftColumn = () => (
  <div className="flex w-[330px] shrink-0 flex-col pl-[3px]">
    <div className="flex h-[45px] shrink-0 items-center justify-between pr-1 pl-[6px]">
      <div className="-mt-2"><Dots /></div>
      <div className="text-xl text-[#1a1a1a]">00:00:00.00</div>
    </div>
    <TrackHeaders />
    <div className="h-[45px] shrink-0 pr-[13px] pl-[3px]">
      <div className="mt-[12px] flex items-center text-[11px] text-black">
        <label htmlFor="rate" className="w-[83px]">Rate: 0.00</label>
        <div className="relative flex h-5 flex-1 items-center">
          <input
            id="rate"
            type="range"
            defaultValue={50}
            className="h-4 w-full appearance-none bg-transparent [&::-webkit-slider-runnable-track]:h-[2px] [&::-webkit-slider-runnable-track]:border-t [&::-webkit-slider-runnable-track]:border-b [&::-webkit-slider-runnable-track]:border-t-[#5e5e5e] [&::-webkit-slider-runnable-track]:border-b-[#aaa] [&::-webkit-slider-thumb]:w-6 [&::-webkit-slider-thumb]:appearance-none"
          />
          <svg viewBox="0 0 28 26" className="pointer-events-none absolute top-1 left-[98px] h-[26px] w-7" aria-hidden="true">
            <path d="M7 1v12L1 7zM13 1v12L7 7zM14 1v12l6-6zM21 1v12l6-6z" fill="url(#steel)" stroke="#2b3035" />
          </svg>
          <svg viewBox="0 0 12 12" className="pointer-events-none absolute top-[18px] left-32 size-3" aria-hidden="true">
            <path d="M6 1l4.500 10.500h-9z" fill="#d9824f" stroke="#7c3420" />
          </svg>
        </div>
      </div>
    </div>
  </div>
);

const MARKS = ['0:00:00', '00:00:15', '00:00:30', '00:00:45', '00:01:00', '00:01:15', '00:01:30', '00:01:45', '00:02:00'];
const MINOR = Array.from({ length: 14 }, (_, i) => Math.round(((i + 1) * 123) / 15));

const Ruler = () => (
  <div className="flex h-4 shrink-0 overflow-hidden border-b border-[#666] text-[10px] leading-[15px] text-black">
    {MARKS.map((mark, i) => (
      <div key={mark} className="relative h-full w-[123px] shrink-0">
        <span className={i === 0 ? 'pl-[6px]' : 'pl-px'}>{mark}</span>
        <svg viewBox="0 0 123 7" className="absolute bottom-0 left-0 h-[7px] w-[123px]" shapeRendering="crispEdges" aria-hidden="true">
          {i > 0 && <rect width="1" height="7" fill="#555" />}
          {MINOR.map((x, n) => (
            <rect key={x} x={x} y="4" width="1" height="3" fill={n % 2 ? '#4c4c4c' : '#c4c4c4'} />
          ))}
        </svg>
      </div>
    ))}
  </div>
);

const Lane: React.FC<{ height: string }> = ({ height }) => (
  <div className={`flex shrink-0 overflow-hidden border-b border-[#666] ${height}`}>
    {MARKS.map((mark, i) => (
      <div key={mark} className={`w-[123px] shrink-0 ${i > 0 ? 'border-l border-[#707070]' : ''}`} />
    ))}
  </div>
);

const steelButton = 'flex shrink-0 items-center justify-center rounded-[2px] border border-[#333] bg-linear-to-b from-[#a6a8a9] to-[#6e7274]';

const ScrollButton: React.FC<{ label: string; d?: string; size: string; children?: React.ReactNode }> = ({ label, d, size, children }) => (
  <button aria-label={label} className={`${steelButton} ${size}`}>
    {(d || children) && (
      <svg viewBox="0 0 12 12" className="size-3 shrink-0" aria-hidden="true">
        {d && <path d={d} fill="#000" />}
        {children}
      </svg>
    )}
  </button>
);

const PLUS = 'M5 3h2v2h2v2H7v2H5V7H3V5h2z';
const MINUS = 'M3 5h6v2H3z';

const VScroll = () => (
  <div className="flex w-[17px] shrink-0 flex-col gap-px bg-[#555]">
    <ScrollButton label="Marker tool" size="h-4">
      <path d="M2 1h8v7H5v4H2zM5 3v3h3V3z" fill="#000" fillRule="evenodd" />
    </ScrollButton>
    <ScrollButton label="Scroll tracks up" size="h-4" d="M2 8h8L6 4z" />
    <div className="flex h-[154px] shrink-0 flex-col items-center justify-center gap-[2px] rounded-[3px] border border-[#333] bg-linear-to-r from-[#a6a8a9] to-[#6e7274]">
      <span className="h-px w-[10px] bg-[#333]" />
      <span className="h-px w-[10px] bg-[#333]" />
      <span className="h-px w-[10px] bg-[#333]" />
    </div>
    <div className="flex-1" />
    <ScrollButton label="Scroll tracks down" size="h-4" d="M2 4h8L6 8z" />
    <ScrollButton label="Zoom in track height" size="h-[17px]" d={PLUS} />
    <ScrollButton label="Track height zoom" size="h-[6px]" />
    <ScrollButton label="Zoom out track height" size="h-[17px]" d={MINUS} />
  </div>
);

const HScroll = () => (
  <div className="flex h-4 shrink-0 gap-px bg-[#555]">
    <ScrollButton label="Scroll left" size="w-4" d="M8 2v8L4 6z" />
    <div className="flex flex-1 items-center justify-between rounded-[2px] border border-[#333] bg-linear-to-b from-[#a6a8a9] to-[#62676a] px-[3px]">
      <span className="h-[10px] w-1 border-r border-l border-[#333]" />
      <span className="h-[10px] w-1 border-r border-l border-[#333]" />
    </div>
    <ScrollButton label="Scroll right" size="w-4" d="M4 2v8l4-4z" />
    <ScrollButton label="Zoom in time" size="w-4" d={PLUS} />
    <ScrollButton label="Time zoom" size="w-[5px]" />
    <ScrollButton label="Zoom out time" size="w-[17px]" d={MINUS} />
    <ScrollButton label="Zoom tool" size="w-[17px]">
      <circle cx="5.500" cy="5.500" r="3.500" fill="none" stroke="#111" strokeWidth="1.200" />
      <path d="M8 8l3 3" stroke="#111" strokeWidth="1.600" />
    </ScrollButton>
  </div>
);

const Timeline = () => (
  <div className="flex min-w-0 flex-1 flex-col border-r border-l border-l-[#5e5e5e] border-r-[#ababab]">
    <div className="flex min-h-0 flex-1">
      <div className="flex min-w-0 flex-1 flex-col">
        <div className="flex h-[29px] shrink-0 items-end border-b border-[#646464]">
          <svg viewBox="0 0 7 7" className="size-[7px]" aria-hidden="true"><path d="M0 0h7L0 7z" fill="#fff200" /></svg>
        </div>
        <div className="relative shrink-0 border-t border-[#ababab]">
          <Ruler />
          <svg viewBox="0 0 6 15" className="absolute top-0 left-0 h-[15px] w-[6px]" aria-hidden="true">
            <path d="M0 0h4.500v11L0 15z" fill="#e3e7ea" stroke="#5a6068" />
            <path d="M1 3h2v5" fill="none" stroke="#444" />
          </svg>
        </div>
        <div className="flex min-h-0 flex-1 flex-col border-l border-black bg-[#777]">
          <div className="bg-[#868686]">
            <Lane height="h-16" />
            <Lane height="h-[68px]" />
          </div>
        </div>
      </div>
      <VScroll />
    </div>
    <HScroll />
    <div className="flex h-[29px] shrink-0 items-center border-t border-b border-t-[#ababab] border-b-[#ababab] pr-1">
      <Transport />
      <div className="ml-auto flex items-center text-[11px] text-black">
        <Icon name="mic" />
        <input aria-label="Cursor position" defaultValue="00:00:00.00" className={`ml-[3px] h-[18px] w-[66px] pl-[2px] outline-none ${sunken}`} />
        <Icon name="cursorMark" className="ml-3 size-4" />
        <input aria-label="Selection start" className={`ml-1 h-[18px] w-[66px] ${sunken}`} />
        <Icon name="loopMark" className="ml-[10px] size-4" />
        <input aria-label="Selection length" className={`ml-[2px] h-[18px] w-[66px] ${sunken}`} />
      </div>
    </div>
  </div>
);

export default function App() {
  return (
    <div className="flex min-h-screen w-full flex-col overflow-hidden bg-[#868686] font-['Open_Sans','Noto_Sans',sans-serif]">
      {/* shared fill for the dark transport glyphs */}
      <svg className="absolute size-0" aria-hidden="true">
        <defs>
          <linearGradient id="steel" x1="0" y1="0" x2="1" y2="1">
            <stop offset="0" stopColor="#7b868d" />
            <stop offset="1" stopColor="#1d2226" />
          </linearGradient>
        </defs>
      </svg>
      <TitleBar />
      <nav className="flex h-[21px] shrink-0 items-center border-b-2 border-[#6c6c70] bg-linear-to-b from-white from-30% to-[#d9def1] to-50% pl-px text-xs text-black">
        {MENUS.map(menu => (
          <button key={menu} className="px-[6px]">{menu}</button>
        ))}
      </nav>
      <MainToolbar />
      <div className="flex h-[313px] shrink-0 gap-[5px] pl-[3px]">
        <Explorer />
        <Preview />
        <section className={`w-[17px] shrink-0 ${panel}`}>
          <Gutter />
        </section>
      </div>
      <div className="mt-1 ml-[3px] h-[2px] shrink-0 border-t border-b border-t-[#646464] border-b-[#ababab]" />
      <main className="flex flex-1 gap-[5px]">
        <LeftColumn />
        <Timeline />
      </main>
      <footer className="mt-1 flex h-4 shrink-0 justify-end pr-[2px] text-[11px] text-black">
        <div className={`w-[226px] pl-[2px] leading-[15px] whitespace-nowrap ${sunken}`}>Record Time (2 channels): 16:53:10</div>
      </footer>
    </div>
  );
}
